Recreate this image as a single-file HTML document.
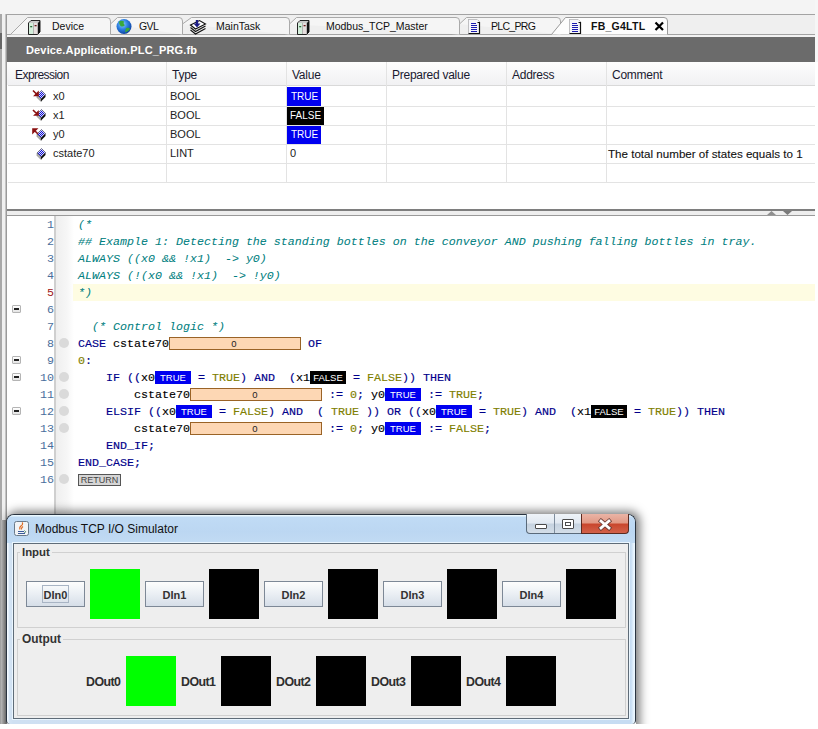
<!DOCTYPE html>
<html><head><meta charset="utf-8">
<style>
*{margin:0;padding:0;box-sizing:border-box}
html,body{width:818px;height:729px;overflow:hidden;background:#fff}
body{position:relative;font-family:"Liberation Sans",sans-serif;color:#1b1b1b}
.a{position:absolute}
.tabt{position:absolute;font-size:10.5px;top:20px;color:#111;white-space:nowrap}
.hd{position:absolute;top:64px;font-size:12px;letter-spacing:-0.25px;color:#1a1a30;white-space:nowrap}
.cell{position:absolute;font-size:11px;color:#222;white-space:nowrap}
.vl{position:absolute;top:62px;width:1px;height:120px;background:#e3e3e3}
.hl{position:absolute;left:8px;width:807px;height:1px;background:#e3e3e3}
.code{position:absolute;left:78px;font-family:"Liberation Mono",monospace;font-size:11.6667px;line-height:17px;white-space:pre;color:#000;height:17px;-webkit-text-stroke:0.15px currentColor}
.bt,.bo{-webkit-text-stroke:0}
.cm{color:#008080;font-style:italic;-webkit-text-stroke:0.05px currentColor}
.kw{color:#00008a}
.lit{color:#808000}
.ln{position:absolute;left:21px;width:33px;text-align:right;font-family:"Liberation Mono",monospace;font-size:11.6667px;line-height:17px;color:#4a6e9c}
.bp{position:absolute;left:59px;width:10px;height:10px;border-radius:50%;background:#dadada}
.fold{position:absolute;left:12px;width:9px;height:8px;border:1px solid #b4b4b4;border-radius:1px;background:linear-gradient(#fff,#e4e4e4)}
.fold:after{content:"";position:absolute;left:1px;top:2px;width:5px;height:2px;background:#222}
.bt{display:inline-block;vertical-align:top;margin-top:1px;height:13px;width:36px;background:#0000f0;color:#fff;font-family:"Liberation Sans",sans-serif;font-size:9.5px;line-height:14px;text-align:center;font-style:normal}
.bf{background:#000}
.bo{display:inline-block;vertical-align:top;margin-top:1px;height:13px;width:132px;background:#fdd7b4;border:1px solid #9a6326;color:#222;font-family:"Liberation Sans",sans-serif;font-size:9.5px;line-height:12px;text-align:center;padding-right:2px}
</style></head><body>
<!-- top strip -->
<div class="a" style="left:0;top:0;width:818px;height:14px;background:#f4f4f4"></div>
<div class="a" style="left:815px;top:0;width:3px;height:62px;background:#f6f6f6"></div>
<!-- left edge -->
<div class="a" style="left:0;top:14px;width:7px;height:710px;background:#f0f0f0"></div>
<div class="a" style="left:0;top:14px;width:2px;height:710px;background:#a8a8a8"></div>
<div class="a" style="left:0;top:33px;width:2px;height:16px;background:#666"></div>
<div class="a" style="left:5px;top:14px;width:1px;height:710px;background:#c4c4c4"></div><div class="a" style="left:6px;top:14px;width:1px;height:710px;background:#9a9a9a"></div>
<!-- tab strip -->
<div class="a" style="left:6px;top:14px;width:809px;height:1px;background:#a3a3a3"></div>
<div class="a" style="left:7px;top:15px;width:808px;height:19px;background:#efefef"></div>
<div class="a" style="left:7px;top:34px;width:808px;height:1px;background:#a3a3a3"></div>
<div class="a" style="left:7px;top:35px;width:808px;height:2px;background:#f2f2f2"></div>
<svg class="a" style="left:0;top:0" width="818" height="37">
 <g fill="#f5f5f5" stroke="#a9a9a9" stroke-width="1">
  <path d="M10.5 34.5 L27.5 17.5 L107 17.5 Q110.5 17.5 110.5 21 L110.5 34.5"/>
  <path d="M110.5 24 L117.5 17.5 L179 17.5 Q182.5 17.5 182.5 21 L182.5 34.5"/>
  <path d="M182.5 24 L191.5 17.5 L286 17.5 Q289.5 17.5 289.5 21 L289.5 34.5"/>
  <path d="M289.5 24 L296.5 17.5 L456 17.5 Q459.5 17.5 459.5 21 L459.5 34.5"/>
  <path d="M459.5 24 L466.5 17.5 L557 17.5 Q560.5 17.5 560.5 21 L560.5 34.5"/>
 </g>
 <path d="M551.5 34.5 L565.5 17.5 L664 17.5 Q667.5 17.5 667.5 21 L667.5 34.5" fill="#fdfdfd" stroke="#9a9a9a"/>
 <!-- device icons -->
 <defs>
  <g id="dev">
   <path d="M0.5 3 L3 0.5 L12 0.5 L12 12 L9.5 14.5 L0.5 14.5Z" fill="#9a9a9a" stroke="#222" stroke-width="1"/>
   <path d="M1 3 L3.2 1 L11.5 1 L9.5 3Z" fill="#c8c8c8"/>
   <rect x="1" y="3" width="4.2" height="11" fill="#d4eedb"/>
   <rect x="5.8" y="3" width="3.6" height="11" fill="#e6dede"/>
   <rect x="2.2" y="6" width="2" height="1.3" fill="#2a6a3a"/>
   <rect x="6.6" y="5" width="2" height="1.3" fill="#6a1a1a"/>
   <path d="M10 3 L12 1 L12 12 L10 14Z" fill="#111"/>
  </g>
 </defs>
 <use href="#dev" x="28" y="20"/>
 <use href="#dev" x="297" y="20"/>
 <!-- globe -->
 <defs><radialGradient id="gl" cx="0.4" cy="0.35" r="0.7"><stop offset="0" stop-color="#8fd0ff"/><stop offset="0.5" stop-color="#2a7ee0"/><stop offset="1" stop-color="#0a3a9a"/></radialGradient></defs>
 <circle cx="124" cy="26.5" r="7.5" fill="url(#gl)"/>
 <path d="M119 21.5 Q122 20 124 21.5 Q123 24 125 25 Q123 27.5 120.5 26 Q119 24 119 21.5Z" fill="#3aa83a"/>
 <path d="M126 28 Q129 27 130 29 Q128 32 125 32.5 Q125.5 30 126 28Z" fill="#3aa83a"/>
 <!-- maintask icon -->
 <path d="M190.5 30 L195.5 34 L205.5 28.5" fill="none" stroke="#111" stroke-width="1.1"/>
 <path d="M190.5 27.5 L195.5 31.5 L205.5 26" fill="none" stroke="#111" stroke-width="1.1"/>
 <path d="M190.5 25 L199.5 20.5 L205.5 24 L195.5 29Z" fill="#fff" stroke="#111" stroke-width="1.1"/>
 <path d="M197 20 L197 25" stroke="#1c1c86" stroke-width="2.4"/>
 <path d="M193.5 23.5 L200.5 23.5 L197 27.5Z" fill="#1c1c86"/>
 <!-- doc icons -->
 <defs>
  <g id="doc">
   <path d="M0.5 14.5 L0.5 0.5 L9 0.5 L11.5 3" fill="none" stroke="#8a8a8a"/>
   <path d="M0.5 0.5 L9 0.5 L12 3.5 L12 15 L0.5 15Z" fill="#f6f6fa"/>
   <path d="M0.5 14.5 L11.5 14.5 L11.5 3.5 L9.5 3.5" fill="none" stroke="#111" stroke-width="1.2"/>
   <path d="M3 4.5h5M3 6.5h6M3 8.5h6M3 10.5h6M3 12.5h6" stroke="#1a1ab0" stroke-width="1"/>
  </g>
 </defs>
 <use href="#doc" x="468" y="19"/>
 <use href="#doc" x="569" y="19"/>
 <path d="M655.5 22.5 L663 30 M663 22.5 L655.5 30" stroke="#000" stroke-width="2.2"/>
</svg>
<div class="tabt" style="left:52px">Device</div>
<div class="tabt" style="left:139px;letter-spacing:-0.6px">GVL</div>
<div class="tabt" style="left:216px">MainTask</div>
<div class="tabt" style="left:326px;letter-spacing:-0.02px">Modbus_TCP_Master</div>
<div class="tabt" style="left:491px;letter-spacing:-0.7px">PLC_PRG</div>
<div class="tabt" style="left:591px;font-weight:bold;letter-spacing:0.25px">FB_G4LTL</div>

<!-- dark header -->
<div class="a" style="left:7px;top:37px;width:808px;height:25px;background:#6b6b6b"></div>
<div class="a" style="left:26px;top:43px;font-size:11px;font-weight:bold;color:#fff;line-height:14px;letter-spacing:0.15px">Device.Application.PLC_PRG.fb</div>

<!-- table -->
<div class="a" style="left:7px;top:62px;width:808px;height:147px;background:#fff"></div>
<div class="a" style="left:7px;top:62px;width:808px;height:23px;background:linear-gradient(#fdfdfd,#f1f1f3)"></div>
<div class="hl" style="top:85px;background:#d9d9d9"></div>
<div class="hl" style="top:106px"></div>
<div class="hl" style="top:125px"></div>
<div class="hl" style="top:144px"></div>
<div class="hl" style="top:163px"></div>
<div class="hl" style="top:182px"></div>
<div class="vl" style="left:166px"></div>
<div class="vl" style="left:286px"></div>
<div class="vl" style="left:386px"></div>
<div class="vl" style="left:506px"></div>
<div class="vl" style="left:606px"></div>
<div class="hd" style="left:15px;line-height:23px;letter-spacing:-0.55px">Expression</div>
<div class="hd" style="left:172px;line-height:23px">Type</div>
<div class="hd" style="left:292px;line-height:23px">Value</div>
<div class="hd" style="left:392px;line-height:23px">Prepared value</div>
<div class="hd" style="left:512px;line-height:23px">Address</div>
<div class="hd" style="left:612px;line-height:23px">Comment</div>

<svg class="a" style="left:0;top:85px" width="60" height="80">
 <defs>
  <pattern id="chk" width="2" height="2" patternUnits="userSpaceOnUse"><rect width="2" height="2" fill="#d8d8ff"/><rect width="1" height="1" fill="#1010d0"/><rect x="1" y="1" width="1" height="1" fill="#1010d0"/></pattern><g id="cube"><path d="M37 10 L41.5 5.5 L45.5 9.5 L41 14Z" fill="url(#chk)" stroke="#555" stroke-width=".6"/><path d="M37 10 L41 14 L41 16.5 L37 12.5Z" fill="#b4b4b4" stroke="#666" stroke-width=".5"/><path d="M41 14 L45.5 9.5 L45.5 12 L41 16.5Z" fill="#111"/></g>
 </defs>
 <use href="#cube" y="0"/><use href="#cube" y="19"/><use href="#cube" y="39"/><use href="#cube" y="58"/>
 <path d="M33 5.5 L37.5 10 M35 10.5 L38 10.5 L38 7.5Z" stroke="#8a1010" stroke-width="1.6" fill="#8a1010"/>
 <path d="M33 25 L37.5 29.5 M35 30 L38 30 L38 27Z" stroke="#8a1010" stroke-width="1.6" fill="#8a1010"/>
 <path d="M38 49 L33.5 44.5 M33 47.5 L33 44 L36.5 44Z" stroke="#8a1010" stroke-width="1.6" fill="#8a1010"/>
</svg>
<div class="cell" style="left:53px;top:90px">x0</div>
<div class="cell" style="left:53px;top:109px">x1</div>
<div class="cell" style="left:53px;top:128px">y0</div>
<div class="cell" style="left:53px;top:147px">cstate70</div>
<div class="cell" style="left:170px;top:90px">BOOL</div>
<div class="cell" style="left:170px;top:109px">BOOL</div>
<div class="cell" style="left:170px;top:128px">BOOL</div>
<div class="cell" style="left:170px;top:147px">LINT</div>
<div class="a" style="left:287px;top:87px;width:34px;height:19px;background:#0000f0;color:#fff;font-size:10px;line-height:19px;padding-left:4px">TRUE</div>
<div class="a" style="left:287px;top:107px;width:37px;height:18px;background:#000;color:#fff;font-size:10px;line-height:18px;padding-left:3px">FALSE</div>
<div class="a" style="left:287px;top:126px;width:34px;height:18px;background:#0000f0;color:#fff;font-size:10px;line-height:18px;padding-left:4px">TRUE</div>
<div class="cell" style="left:290px;top:147px">0</div>
<div class="cell" style="left:608px;top:147px;font-size:11.6px;color:#111;-webkit-text-stroke:0.1px #111">The total number of states equals to 1</div>

<!-- splitter -->
<div class="a" style="left:7px;top:209px;width:808px;height:2px;background:#7e7e7e"></div>
<div class="a" style="left:7px;top:211px;width:808px;height:4px;background:#eeeeee"></div>
<div class="a" style="left:7px;top:215px;width:808px;height:1px;background:#9a9a9a"></div>
<svg class="a" style="left:760px;top:210px" width="40" height="6">
 <path d="M7 5 L11.5 1 L16 5Z" fill="#8f8f8f"/>
 <path d="M23 1 L32 1 L27.5 5Z" fill="#7a7a7a"/>
</svg>

<!-- code area -->
<div class="a" style="left:7px;top:216px;width:808px;height:513px;background:#fff"></div>
<div class="a" style="left:54px;top:216px;width:2px;height:508px;background:#cfcfcf"></div>
<div class="a" style="left:56px;top:216px;width:18px;height:508px;background:linear-gradient(90deg,#efefef,#f6f6f6 60%,#fff)"></div>
<div class="a" style="left:73px;top:284px;width:742px;height:17px;background:#fefce2"></div>

<div class="ln" style="top:217px">1</div>
<div class="ln" style="top:234px">2</div>
<div class="ln" style="top:251px">3</div>
<div class="ln" style="top:268px">4</div>
<div class="ln" style="top:285px;color:#a02020">5</div>
<div class="ln" style="top:302px">6</div>
<div class="ln" style="top:319px">7</div>
<div class="ln" style="top:336px">8</div>
<div class="ln" style="top:353px">9</div>
<div class="ln" style="top:370px">10</div>
<div class="ln" style="top:387px">11</div>
<div class="ln" style="top:404px">12</div>
<div class="ln" style="top:421px">13</div>
<div class="ln" style="top:438px">14</div>
<div class="ln" style="top:455px">15</div>
<div class="ln" style="top:472px">16</div>

<div class="fold" style="top:305px"></div>
<div class="fold" style="top:356px"></div>
<div class="fold" style="top:373px"></div>
<div class="fold" style="top:407px"></div>

<div class="bp" style="top:338px"></div>
<div class="bp" style="top:372px"></div>
<div class="bp" style="top:389px"></div>
<div class="bp" style="top:406px"></div>
<div class="bp" style="top:423px"></div>
<div class="bp" style="top:474px"></div>

<div class="code cm" style="top:217px">(*</div>
<div class="code cm" style="top:234px">## Example 1: Detecting the standing bottles on the conveyor AND pushing falling bottles in tray.</div>
<div class="code cm" style="top:251px">ALWAYS ((x0 &amp;&amp; !x1)  -&gt; y0)</div>
<div class="code cm" style="top:268px">ALWAYS (!(x0 &amp;&amp; !x1)  -&gt; !y0)</div>
<div class="code cm" style="top:285px">*)</div>
<div class="code" style="top:319px"><span class="cm">  (* Control logic *)</span></div>
<div class="code" style="top:336px"><span class="kw">CASE</span> cstate70<span class="bo">0</span> <span class="kw">OF</span></div>
<div class="code" style="top:353px"><span class="lit">0</span><span class="kw">:</span></div>
<div class="code" style="top:370px">    <span class="kw">IF</span> <span class="kw">((</span>x0<span class="bt">TRUE</span> <span class="kw">=</span> <span class="lit">TRUE</span><span class="kw">)</span> <span class="kw">AND</span>  <span class="kw">(</span>x1<span class="bt bf">FALSE</span> <span class="kw">=</span> <span class="lit">FALSE</span><span class="kw">))</span> <span class="kw">THEN</span></div>
<div class="code" style="top:387px">        cstate70<span class="bo">0</span> <span class="kw">:=</span> <span class="lit">0</span><span class="kw">;</span> y0<span class="bt">TRUE</span> <span class="kw">:=</span> <span class="lit">TRUE</span><span class="kw">;</span></div>
<div class="code" style="top:404px">    <span class="kw">ELSIF</span> <span class="kw">((</span>x0<span class="bt">TRUE</span> <span class="kw">=</span> <span class="lit">FALSE</span><span class="kw">)</span> <span class="kw">AND</span>  <span class="kw">(</span> <span class="lit">TRUE</span> <span class="kw">))</span> <span class="kw">OR</span> <span class="kw">((</span>x0<span class="bt">TRUE</span> <span class="kw">=</span> <span class="lit">TRUE</span><span class="kw">)</span> <span class="kw">AND</span>  <span class="kw">(</span>x1<span class="bt bf">FALSE</span> <span class="kw">=</span> <span class="lit">TRUE</span><span class="kw">))</span> <span class="kw">THEN</span></div>
<div class="code" style="top:421px">        cstate70<span class="bo">0</span> <span class="kw">:=</span> <span class="lit">0</span><span class="kw">;</span> y0<span class="bt">TRUE</span> <span class="kw">:=</span> <span class="lit">FALSE</span><span class="kw">;</span></div>
<div class="code" style="top:438px">    <span class="kw">END_IF;</span></div>
<div class="code" style="top:455px"><span class="kw">END_CASE;</span></div>
<div class="a" style="left:78px;top:474px;width:43px;height:12px;background:#d6d6d6;border:1px solid #555;font-size:9px;line-height:10px;color:#444;text-align:center">RETURN</div>

<!-- window shadow -->
<div class="a" style="left:7px;top:514px;width:629px;height:240px;border-radius:8px;box-shadow:2px -1px 10px 2px rgba(0,0,0,.5)"></div>
<!-- window -->
<div class="a" style="left:1px;top:520px;width:5px;height:204px;background:linear-gradient(90deg,#b8b8b8,#8a8a8a 60%,#6a6a6a)"></div>
<div class="a" style="left:6px;top:514px;width:630px;height:210px;border:1px solid #2a3440;border-bottom:none;border-radius:8px 8px 4px 4px;background:linear-gradient(90deg,#f4faff,#f4faff 1px,#d4e4f4 2px,#cfe0f2 6px,#c6dcf2 calc(100% - 4px),#eaf6ff calc(100% - 1px))"></div>
<div class="a" style="left:7px;top:515px;width:628px;height:28px;border-radius:7px 7px 0 0;background:linear-gradient(#eaf8ff,#eaf8ff 1px,#c0dbf5 2px,#bcd7f2 60%,#c2dbf3)"></div>
<!-- title icon -->
<svg class="a" style="left:14px;top:521px" width="17" height="17">
 <rect x=".5" y=".5" width="14" height="14" rx="2" fill="#f2f4f6" stroke="#6a7a8a"/>
 <path d="M4 10.5 h6 M4 12.5 h7" stroke="#3a5a9a" stroke-width="1"/>
 <path d="M10.5 9.5 Q12.5 10.5 10.5 12" stroke="#3a7a5a" stroke-width="1" fill="none"/>
 <path d="M6 8.5 Q5 6 7.5 4.5 Q9.5 3 8 1.5 M7.5 8.5 Q7 7 9 5.5" stroke="#e06a20" stroke-width="1.1" fill="none"/>
</svg>
<div class="a" style="left:35px;top:522px;font-size:12px;color:#111;line-height:14px">Modbus TCP I/O Simulator</div>
<!-- title buttons -->
<div class="a" style="left:526px;top:514px;width:56px;height:20px;border:1px solid #5a6a7a;border-top:none;border-radius:0 0 0 4px;background:linear-gradient(#eef3f8,#e2e9f1 45%,#c6d3e0 55%,#d4dee8)"></div>
<div class="a" style="left:554px;top:514px;width:1px;height:19px;background:#7f8e9e"></div>
<div class="a" style="left:581px;top:514px;width:48px;height:20px;border:1px solid #5a2a20;border-top:none;border-radius:0 0 4px 0;background:linear-gradient(#eab4a6,#e29a86 45%,#c9472e 55%,#d2614a)"></div>
<div class="a" style="left:535px;top:524px;width:12px;height:5px;border:1px solid #4a4a4a;border-radius:1px;background:#fff"></div>
<div class="a" style="left:562px;top:519px;width:12px;height:10px;border:1px solid #4a4a4a;border-radius:1px;background:#fff"></div>
<div class="a" style="left:565px;top:522px;width:6px;height:4px;border:1px solid #4a4a4a"></div>
<svg class="a" style="left:597px;top:517px" width="16" height="14"><path d="M4 4 L12 11 M12 4 L4 11" stroke="#6a3a34" stroke-width="4.4" stroke-linecap="square"/><path d="M4 4 L12 11 M12 4 L4 11" stroke="#fff" stroke-width="2.8" stroke-linecap="square"/></svg>
<!-- content -->
<div class="a" style="left:13px;top:543px;width:616px;height:176px;background:#eeeeee;border:1px solid #5f6c78;box-shadow:0 0 0 1px #eaf6ff"></div>
<!-- input group -->
<div class="a" style="left:17px;top:552px;width:609px;height:76px;border:1px solid #d0d0d0"></div>
<div class="a" style="left:20px;top:545px;padding:0 2px;background:#eeeeee;font-size:11.4px;font-weight:bold;color:#333;line-height:14px">Input</div>
<!-- output group -->
<div class="a" style="left:17px;top:639px;width:609px;height:77px;border:1px solid #d0d0d0"></div>
<div class="a" style="left:20px;top:632px;padding:0 2px;background:#eeeeee;font-size:11.9px;font-weight:bold;color:#333;line-height:14px">Output</div>

<style>
.btn{position:absolute;top:581px;width:59px;height:26px;border:1px solid #7d8896;border-radius:0;background:linear-gradient(#fdfdfd,#eef2f6 40%,#d6dee8);font-size:11px;font-weight:bold;color:#333;text-align:center;line-height:26px}
.sq{position:absolute;width:50px;height:50px;background:#000}
.ol{position:absolute;top:675px;font-size:12.4px;letter-spacing:-0.55px;font-weight:bold;color:#2e2e2e}
</style>
<div class="btn" style="left:26px">DIn0<div class="a" style="left:15px;top:3px;width:27px;height:18px;border:1px solid #a8b4c4"></div></div>
<div class="sq" style="left:90px;top:569px;background:#00ff00"></div>
<div class="btn" style="left:145px">DIn1</div>
<div class="sq" style="left:209px;top:569px"></div>
<div class="btn" style="left:264px">DIn2</div>
<div class="sq" style="left:328px;top:569px"></div>
<div class="btn" style="left:383px">DIn3</div>
<div class="sq" style="left:447px;top:569px"></div>
<div class="btn" style="left:502px">DIn4</div>
<div class="sq" style="left:566px;top:569px"></div>

<div class="ol" style="left:86px">DOut0</div>
<div class="sq" style="left:126px;top:656px;background:#00ff00"></div>
<div class="ol" style="left:181px">DOut1</div>
<div class="sq" style="left:221px;top:656px"></div>
<div class="ol" style="left:276px">DOut2</div>
<div class="sq" style="left:316px;top:656px"></div>
<div class="ol" style="left:371px">DOut3</div>
<div class="sq" style="left:411px;top:656px"></div>
<div class="ol" style="left:466px">DOut4</div>
<div class="sq" style="left:506px;top:656px"></div>
<div class="a" style="left:0;top:724px;width:818px;height:5px;background:#fff"></div>
</body></html>
